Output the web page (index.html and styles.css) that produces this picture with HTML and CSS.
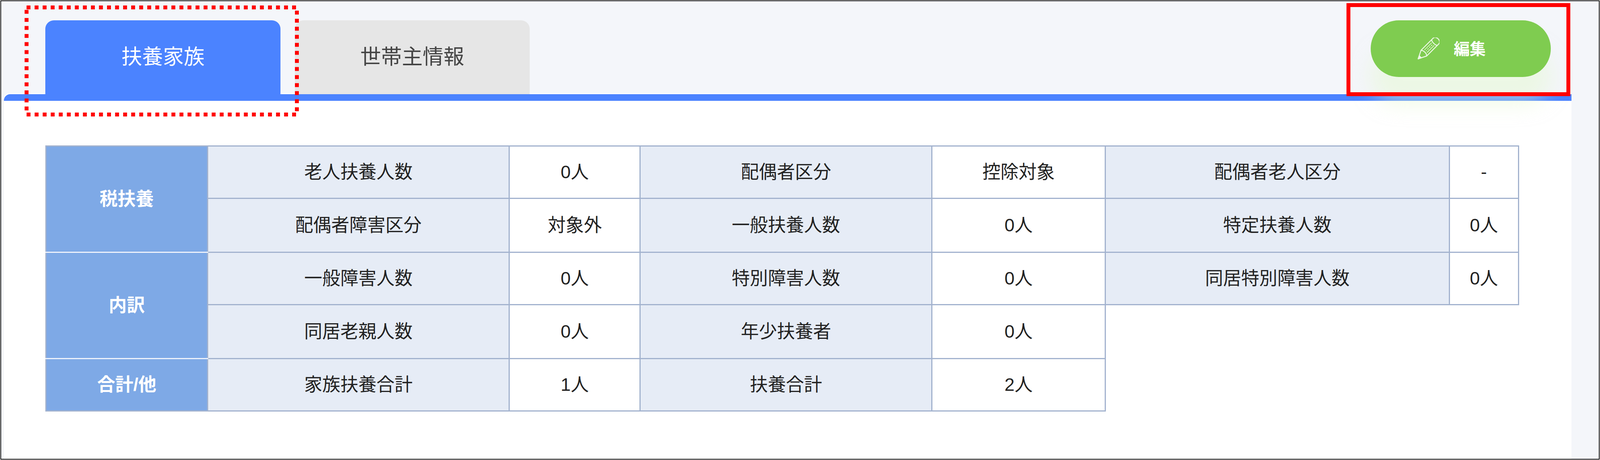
FILE: index.html
```html
<!DOCTYPE html>
<html lang="ja">

<head>
    <meta charset="UTF-8">
    <title>扶養家族</title>
    <link rel="stylesheet" href="styles.css">
</head>

<body>
    <div class="frame">
        <header class="top-bar">
            <nav class="tabs">
                <a class="tab tab-active">扶養家族</a>
                <a class="tab">世帯主情報</a>
            </nav>
            <button class="edit-btn">
                <svg class="pencil" viewBox="0 0 60 60" fill="none" stroke="#fff" stroke-width="2.6" stroke-linejoin="round">
                    <g transform="rotate(45 30 30)">
                        <path d="M19 1 C19 -10 41 -10 41 1 V48 L30 70 L19 48 Z" />
                        <path d="M19 7 C24 11 36 11 41 7" />
                        <path d="M19 48 C24 43 36 43 41 48" />
                        <path d="M25 13 V41 M35 13 V41" stroke-width="1.6" />
                        <path d="M30 16 V39" stroke-dasharray="4 3" stroke-width="2" />
                        <path d="M26 62 L30 70 L34 62 Z" fill="#fff" />
                    </g>
                </svg>
                <span class="edit-text">編集</span>
            </button>
        </header>

        <main class="panel">
            <table class="dep-table">
                <colgroup>
                    <col class="c-head">
                    <col class="c-label1">
                    <col class="c-val1">
                    <col class="c-label2">
                    <col class="c-val2">
                    <col class="c-label3">
                    <col class="c-val3">
                </colgroup>
                <tr>
                    <th rowspan="2">税扶養</th>
                    <td class="label">老人扶養人数</td>
                    <td>0人</td>
                    <td class="label">配偶者区分</td>
                    <td>控除対象</td>
                    <td class="label">配偶者老人区分</td>
                    <td>-</td>
                </tr>
                <tr>
                    <td class="label">配偶者障害区分</td>
                    <td>対象外</td>
                    <td class="label">一般扶養人数</td>
                    <td>0人</td>
                    <td class="label">特定扶養人数</td>
                    <td>0人</td>
                </tr>
                <tr>
                    <th rowspan="2">内訳</th>
                    <td class="label">一般障害人数</td>
                    <td>0人</td>
                    <td class="label">特別障害人数</td>
                    <td>0人</td>
                    <td class="label">同居特別障害人数</td>
                    <td>0人</td>
                </tr>
                <tr>
                    <td class="label">同居老親人数</td>
                    <td>0人</td>
                    <td class="label">年少扶養者</td>
                    <td>0人</td>
                    <td class="blank" colspan="2"></td>
                </tr>
                <tr>
                    <th class="last">合計/他</th>
                    <td class="label">家族扶養合計</td>
                    <td>1人</td>
                    <td class="label">扶養合計</td>
                    <td>2人</td>
                    <td class="blank" colspan="2"></td>
                </tr>
            </table>
        </main>

        <!-- annotation marks drawn over the screen -->
        <svg class="mark-dotted" fill="none">
            <rect stroke="#f00" stroke-width="10" stroke-dasharray="10 10.6" />
        </svg>
        <div class="mark-box"></div>
    </div>
</body>

</html>
```

FILE: styles.css
```css
:root {
    --blue: #4b83ff;
    --green: #7fcc50;
    --line: #a2b2ce;
    --head: #7ea9e6;
    --label: #e6ecf6;
}

* {
    box-sizing: border-box;
}

body {
    margin: 1px;
    background: #fff;
    font-family: "Liberation Sans", "Noto Sans CJK JP", sans-serif;
    color: #222;
}

.frame {
    position: relative;
    display: flex;
    flex-direction: column;
    height: calc(100vh - 2px);
    background: #f4f6fa;
    border: 2px solid #111;
    overflow: hidden;
}

.top-bar {
    position: relative;
    z-index: 1;
    display: flex;
    justify-content: space-between;
    align-items: flex-start;
    padding: 49px 3vw 0 2.77vw;
}

.tabs {
    display: flex;
    gap: 0.89vw;
}

.tab {
    display: flex;
    align-items: center;
    justify-content: center;
    width: 14.69vw;
    height: 189px;
    padding-bottom: 12px;
    border-radius: 22px 22px 0 0;
    background: #e6e6e6;
    color: #444;
    font-size: 1.3vw;
}

.tab-active {
    background: var(--blue);
    color: #fff;
}

.edit-btn {
    display: flex;
    align-items: center;
    justify-content: center;
    gap: 0.89vw;
    width: 11.26vw;
    height: 145px;
    padding: 0 1.14vw 0 0;
    border: none;
    border-radius: 72px;
    background: var(--green);
    color: #fff;
    font-family: inherit;
    font-size: 1vw;
    font-weight: bold;
    box-shadow: 0 70px 50px rgba(230, 250, 210, 0.5);
}

.edit-text {
    margin-bottom: 6px;
}

.pencil {
    width: 1.37vw;
    height: 1.37vw;
    opacity: 0.85;
}

.panel {
    flex: 1;
    margin: 0 1.72vw 0 0.18vw;
    padding: 114px 0 0 2.59vw;
    background: #fff;
    border-top: 17px solid var(--blue);
    border-top-left-radius: 16px;
    box-shadow: 0 -3px 0 #fff;
}

.dep-table {
    table-layout: fixed;
    width: 92.1vw;
    border-collapse: collapse;
    font-size: 1.13vw;
    text-align: center;
}

.c-head { width: 10.96%; }
.c-label1 { width: 20.5%; }
.c-val1 { width: 8.89%; }
.c-label2 { width: 19.8%; }
.c-val2 { width: 11.8%; }
.c-label3 { width: 23.35%; }
.c-val3 { width: 4.7%; }

.dep-table tr { height: 134px; }
.dep-table tr:nth-child(even) { height: 138px; }

.dep-table th,
.dep-table td {
    padding: 0;
    border: 3px solid var(--line);
    line-height: 1;
}

.dep-table th {
    background: var(--head);
    color: #fff;
    font-weight: bold;
    border-bottom-color: #eef2fb;
}

.dep-table th.last {
    border-bottom-color: var(--line);
}

.dep-table .label {
    background: var(--label);
}

.dep-table .blank {
    border-top: none;
    border-right: none;
    border-bottom: none;
}

.mark-dotted {
    position: absolute;
    left: 1.465vw;
    top: 11px;
    width: 17.14vw;
    height: 284px;
    z-index: 2;
}

.mark-dotted rect {
    x: 5px;
    y: 5px;
    width: calc(100% - 10px);
    height: calc(100% - 10px);
}

.mark-box {
    position: absolute;
    left: 84.07vw;
    top: 5px;
    width: 14vw;
    height: 238px;
    border: 10px solid #f00;
    z-index: 2;
}
```
